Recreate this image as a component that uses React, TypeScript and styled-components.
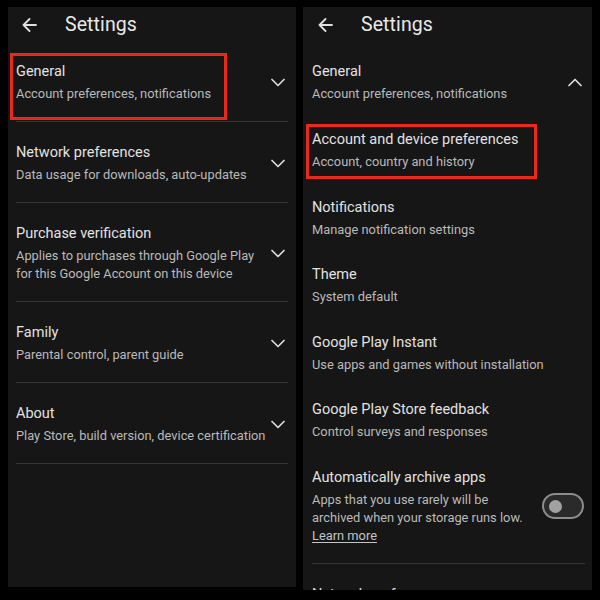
import React from "react";
import styled, { createGlobalStyle } from "styled-components";

const Global = createGlobalStyle`
  html, body { margin: 0; padding: 0; background: #000; }
  body { font-family: Roboto, "Noto Sans", Arial, sans-serif; -webkit-font-smoothing: antialiased; }
  #root { width: 600px; height: 600px; }
`;

const Screen = styled.div`
  width: 600px;
  height: 600px;
  box-sizing: border-box;
  overflow: hidden;
  background: #000;
  display: flex;
  align-items: flex-start;
  gap: 7px;
  padding: 7px 8px 0 8px;
`;

const Panel = styled.div<{ $w: number; $h: number; $pl: number; $pr: number }>`
  width: ${(p) => p.$w}px;
  height: ${(p) => p.$h}px;
  flex: none;
  box-sizing: border-box;
  overflow: hidden;
  background: #161616;
  padding: 0 ${(p) => p.$pr}px 0 ${(p) => p.$pl}px;
  display: flex;
  flex-direction: column;
`;

const Header = styled.div`
  height: 34px;
  flex: none;
  display: flex;
  align-items: center;
  gap: 28px;
  padding-left: 6px;
  padding-top: 1px;
  box-sizing: border-box;
`;

const HeaderTitle = styled.span`
  font-size: 19.5px;
  color: #e8e8e8;
  letter-spacing: 0.1px;
`;

const Row = styled.div<{ $pt: number; $pb: number; $divider?: boolean }>`
  position: relative;
  flex: none;
  display: flex;
  align-items: center;
  justify-content: space-between;
  padding: ${(p) => p.$pt}px 0 ${(p) => p.$pb}px 0;
  border-bottom: ${(p) => (p.$divider ? "1px solid #363636" : "none")};
`;

const TextCol = styled.div`
  display: flex;
  flex-direction: column;
  gap: 3px;
`;

const Title = styled.div`
  font-size: 14.5px;
  line-height: 20px;
  color: #e2e2e2;
  white-space: nowrap;
`;

const Sub = styled.div`
  font-size: 12.85px;
  line-height: 18px;
  color: #bababa;
  white-space: nowrap;
`;

const LearnMore = styled.span`
  text-decoration: underline;
  text-underline-offset: 2px;
  color: #c4c4c4;
`;

const Highlight = styled.div<{ $l: number; $t: number; $w: number; $h: number }>`
  position: absolute;
  left: ${(p) => p.$l}px;
  top: ${(p) => p.$t}px;
  width: ${(p) => p.$w}px;
  height: ${(p) => p.$h}px;
  box-sizing: border-box;
  border: 3px solid #e8291c;
  pointer-events: none;
`;

const ChevronBox = styled.svg`
  flex: none;
  margin-right: 3px;
`;

const Toggle = styled.div`
  flex: none;
  width: 42px;
  height: 26px;
  margin-right: 1px;
  box-sizing: border-box;
  border: 2px solid #8c8c8c;
  border-radius: 13px;
  background: #2a2a2a;
  display: flex;
  align-items: center;
  padding-left: 5px;
`;

const Knob = styled.div`
  width: 13px;
  height: 13px;
  border-radius: 50%;
  background: #a2a2a2;
`;

const BackArrow = () => (
  <svg width="15" height="14" viewBox="0 0 15 14" fill="none">
    <path d="M14 7H1.5M7.5 1L1.5 7l6 6" stroke="#e0e0e0" strokeWidth="1.8" strokeLinecap="round" strokeLinejoin="round" />
  </svg>
);

const Chevron = ({ up }: { up?: boolean }) => (
  <ChevronBox width="14" height="9" viewBox="0 0 14 9" fill="none">
    <path
      d={up ? "M1 7.5l6-6 6 6" : "M1 1.5l6 6 6-6"}
      stroke="#dcdcdc"
      strokeWidth="1.7"
      strokeLinecap="round"
      strokeLinejoin="round"
    />
  </ChevronBox>
);

type Item = { title: string; sub: React.ReactNode };

const leftItems: Item[] = [
  { title: "Network preferences", sub: "Data usage for downloads, auto-updates" },
  {
    title: "Purchase verification",
    sub: (
      <>
        Applies to purchases through Google Play
        <br />
        for this Google Account on this device
      </>
    ),
  },
  { title: "Family", sub: "Parental control, parent guide" },
  { title: "About", sub: "Play Store, build version, device certification" },
];

const subItems: Item[] = [
  { title: "Notifications", sub: "Manage notification settings" },
  { title: "Theme", sub: "System default" },
  { title: "Google Play Instant", sub: "Use apps and games without installation" },
  { title: "Google Play Store feedback", sub: "Control surveys and responses" },
];

export default function App() {
  return (
    <>
      <Global />
      <Screen>
        <Panel $w={288} $h={580} $pl={8} $pr={8}>
          <Header>
            <BackArrow />
            <HeaderTitle>Settings</HeaderTitle>
          </Header>
          <Row $pt={21} $pb={18} $divider>
            <TextCol>
              <Title>General</Title>
              <Sub>Account preferences, notifications</Sub>
            </TextCol>
            <Chevron />
            <Highlight $l={-6} $t={12} $w={217} $h={67} />
          </Row>
          {leftItems.map((it) => (
            <Row key={it.title} $pt={21} $pb={18} $divider>
              <TextCol>
                <Title>{it.title}</Title>
                <Sub>{it.sub}</Sub>
              </TextCol>
              <Chevron />
            </Row>
          ))}
        </Panel>

        <Panel $w={289} $h={583} $pl={9} $pr={7}>
          <Header>
            <BackArrow />
            <HeaderTitle>Settings</HeaderTitle>
          </Header>
          <Row $pt={21} $pb={13}>
            <TextCol>
              <Title>General</Title>
              <Sub>Account preferences, notifications</Sub>
            </TextCol>
            <Chevron up />
          </Row>
          <Row $pt={14} $pb={12.5}>
            <TextCol>
              <Title>Account and device preferences</Title>
              <Sub>Account, country and history</Sub>
            </TextCol>
            <Highlight $l={-6} $t={8} $w={231} $h={55} />
          </Row>
          {subItems.map((it) => (
            <Row key={it.title} $pt={14} $pb={12.5}>
              <TextCol>
                <Title>{it.title}</Title>
                <Sub>{it.sub}</Sub>
              </TextCol>
            </Row>
          ))}
          <Row $pt={14} $pb={18.5} $divider>
            <TextCol>
              <Title>Automatically archive apps</Title>
              <Sub>
                Apps that you use rarely will be
                <br />
                archived when your storage runs low.
                <br />
                <LearnMore>Learn more</LearnMore>
              </Sub>
            </TextCol>
            <Toggle>
              <Knob />
            </Toggle>
          </Row>
          <Row $pt={21} $pb={18}>
            <TextCol>
              <Title>Network preferences</Title>
              <Sub>Data usage for downloads, auto-updates</Sub>
            </TextCol>
          </Row>
        </Panel>
      </Screen>
    </>
  );
}
